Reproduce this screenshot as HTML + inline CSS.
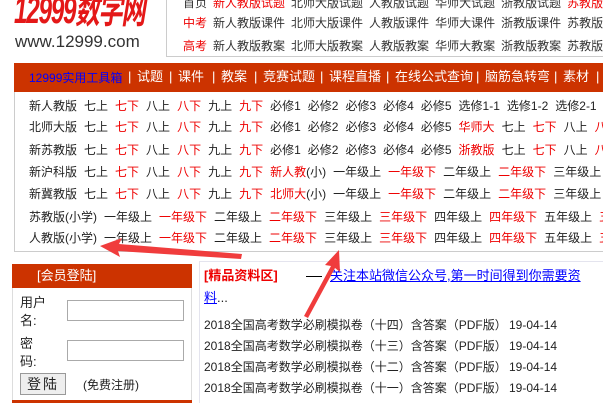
<!DOCTYPE html>
<html><head><meta charset="utf-8"><style>
*{margin:0;padding:0;box-sizing:border-box}
html,body{width:603px;height:403px;overflow:hidden}
body{background:#fff;position:relative;font-family:"Liberation Sans","Noto Sans CJK SC",sans-serif;font-size:12px;color:#222}
#w{position:absolute;left:0;top:0;width:603px;height:403px;overflow:hidden}
.a{position:absolute;white-space:nowrap;line-height:14px}
.r{color:#e00}
.hd span{margin-right:6px}
.row{position:absolute;left:29px;white-space:nowrap;line-height:14px}
.row span{margin-right:7px}
.nav{position:absolute;top:63px;left:14px;width:600px;height:29px;background:#cc3300}
.nav .a{color:#fff;font-size:13px;top:7px}
</style></head><body><div id="w">
<div class="a" style="left:14px;top:-10px;font-size:38px;line-height:42px;color:#e41818;font-weight:bold;font-style:italic;letter-spacing:-2px;transform:scaleX(0.64);transform-origin:0 0">12999数学网</div>
<div class="a" style="left:15px;top:33px;font-size:17px;line-height:17px;color:#333">www.12999.com</div>
<div style="position:absolute;left:166px;top:-2px;width:450px;height:59px;border:1px solid #ccc;border-right:none"></div>
<div class="a hd" style="left:183px;top:-4px;color:#333"><span>首页</span><span class="r">新人教版试题</span><span>北师大版试题</span><span>人教版试题</span><span>华师大试题</span><span>浙教版试题</span><span class="r">苏教版试题</span></div>
<div class="a hd" style="left:183px;top:16px;color:#333"><span class="r">中考</span><span>新人教版课件</span><span>北师大版课件</span><span>人教版课件</span><span>华师大课件</span><span>浙教版课件</span><span>苏教版课件</span></div>
<div class="a hd" style="left:183px;top:39px;color:#333"><span class="r">高考</span><span>新人教版教案</span><span>北师大版教案</span><span>人教版教案</span><span>华师大教案</span><span>浙教版教案</span><span>苏教版教案</span></div>
<div class="nav">
<div class="a" style="left:15px;color:#00f;font-size:12px;top:8px">12999实用工具箱</div>
<div class="a" style="left:114px">|</div><div class="a" style="left:123px">试题</div>
<div class="a" style="left:155px">|</div><div class="a" style="left:164px">课件</div>
<div class="a" style="left:198px">|</div><div class="a" style="left:207px">教案</div>
<div class="a" style="left:240px">|</div><div class="a" style="left:249px">竞赛试题</div>
<div class="a" style="left:306px">|</div><div class="a" style="left:315px">课程直播</div>
<div class="a" style="left:372px">|</div><div class="a" style="left:381px">在线公式查询</div>
<div class="a" style="left:462px">|</div><div class="a" style="left:471px">脑筋急转弯</div>
<div class="a" style="left:540px">|</div><div class="a" style="left:549px">素材</div>
<div class="a" style="left:582px">|</div>
</div>
<div style="position:absolute;left:14px;top:92px;width:600px;height:160px;border:1px solid #ccc;border-top:none;border-right:none"></div>
<div class="row" style="top:99px"><span>新人教版</span><span>七上</span><span class="r">七下</span><span>八上</span><span class="r">八下</span><span>九上</span><span class="r">九下</span><span>必修1</span><span>必修2</span><span>必修3</span><span>必修4</span><span>必修5</span><span>选修1-1</span><span>选修1-2</span><span>选修2-1</span><span>选修2-2</span></div>
<div class="row" style="top:120px"><span>北师大版</span><span>七上</span><span class="r">七下</span><span>八上</span><span class="r">八下</span><span>九上</span><span class="r">九下</span><span>必修1</span><span>必修2</span><span>必修3</span><span>必修4</span><span>必修5</span><span class="r">华师大</span><span>七上</span><span class="r">七下</span><span>八上</span><span class="r">八下</span></div>
<div class="row" style="top:143px"><span>新苏教版</span><span>七上</span><span class="r">七下</span><span>八上</span><span class="r">八下</span><span>九上</span><span class="r">九下</span><span>必修1</span><span>必修2</span><span>必修3</span><span>必修4</span><span>必修5</span><span class="r">浙教版</span><span>七上</span><span class="r">七下</span><span>八上</span><span class="r">八下</span></div>
<div class="row" style="top:165px"><span>新沪科版</span><span>七上</span><span class="r">七下</span><span>八上</span><span class="r">八下</span><span>九上</span><span class="r">九下</span><span><b class="r" style="font-weight:normal">新人教</b>(小)</span><span>一年级上</span><span class="r">一年级下</span><span>二年级上</span><span class="r">二年级下</span><span>三年级上</span><span class="r">三年级下</span></div>
<div class="row" style="top:187px"><span>新冀教版</span><span>七上</span><span class="r">七下</span><span>八上</span><span class="r">八下</span><span>九上</span><span class="r">九下</span><span><b class="r" style="font-weight:normal">北师大</b>(小)</span><span>一年级上</span><span class="r">一年级下</span><span>二年级上</span><span class="r">二年级下</span><span>三年级上</span><span class="r">三年级下</span></div>
<div class="row" style="top:210px"><span>苏教版(小学)</span><span>一年级上</span><span class="r">一年级下</span><span>二年级上</span><span class="r">二年级下</span><span>三年级上</span><span class="r">三年级下</span><span>四年级上</span><span class="r">四年级下</span><span>五年级上</span><span class="r">五年级下</span></div>
<div class="row" style="top:231px"><span>人教版(小学)</span><span>一年级上</span><span class="r">一年级下</span><span>二年级上</span><span class="r">二年级下</span><span>三年级上</span><span class="r">三年级下</span><span>四年级上</span><span class="r">四年级下</span><span>五年级上</span><span class="r">五年级下</span></div>
<div style="position:absolute;left:12px;top:264px;width:180px;height:140px;border:1px solid #ddd;border-top:none"></div>
<div style="position:absolute;left:12px;top:264px;width:180px;height:24px;background:#cc3300"></div>
<div class="a" style="left:37px;top:269px;color:#fff;font-size:13px">[会员登陆]</div>
<div style="position:absolute;left:12px;top:400px;width:180px;height:3px;background:#cc3300"></div>
<div class="a" style="left:20px;top:296px;font-size:13px">用户</div>
<div class="a" style="left:20px;top:314px;font-size:13px">名:</div>
<div class="a" style="left:20px;top:337px;font-size:13px">密</div>
<div class="a" style="left:20px;top:355px;font-size:13px">码:</div>
<div style="position:absolute;left:67px;top:300px;width:117px;height:21px;border:1px solid #aaa"></div>
<div style="position:absolute;left:67px;top:340px;width:117px;height:21px;border:1px solid #aaa"></div>
<div style="position:absolute;left:20px;top:373px;width:46px;height:22px;border:1px solid #999;background:#eee;font-size:14px;line-height:20px;text-align:center;letter-spacing:2px">登陆</div>
<div class="a" style="left:83px;top:378px;font-size:12px">(免费注册)</div>
<div style="position:absolute;left:199px;top:261px;width:420px;height:150px;border:1px solid #e4e4ee;border-right:none"></div>
<div class="a" style="left:204px;top:269px;color:#e00;font-weight:bold;font-size:13px">[精品资料区]</div>
<div style="position:absolute;left:306px;top:276px;width:16px;height:1px;background:#000"></div>
<div class="a" style="left:330px;top:269px;color:#00f;text-decoration:underline;font-size:13px">关注本站微信公众号,第一时间得到你需要资</div>
<div class="a" style="left:204px;top:291px;font-size:13px"><span style="color:#00f;text-decoration:underline">料</span>...</div>
<div class="a" style="left:204px;top:318px">2018全国高考数学必刷模拟卷（十四）含答案（PDF版）</div><div class="a" style="left:509px;top:318px">19-04-14</div>
<div class="a" style="left:204px;top:339px">2018全国高考数学必刷模拟卷（十三）含答案（PDF版）</div><div class="a" style="left:509px;top:339px">19-04-14</div>
<div class="a" style="left:204px;top:360px">2018全国高考数学必刷模拟卷（十二）含答案（PDF版）</div><div class="a" style="left:509px;top:360px">19-04-14</div>
<div class="a" style="left:204px;top:381px">2018全国高考数学必刷模拟卷（十一）含答案（PDF版）</div><div class="a" style="left:509px;top:381px">19-04-14</div>
<svg style="position:absolute;left:0;top:0" width="603" height="403">
<polygon points="100,246 122,238 119,244 242,254 241,259 118,251 120,257" fill="#f03c3c"/>
<polygon points="339,250 340,272 335,268 308,318 304,316 331,266 325,265" fill="#f03c3c"/>
</svg>
</div></body></html>
